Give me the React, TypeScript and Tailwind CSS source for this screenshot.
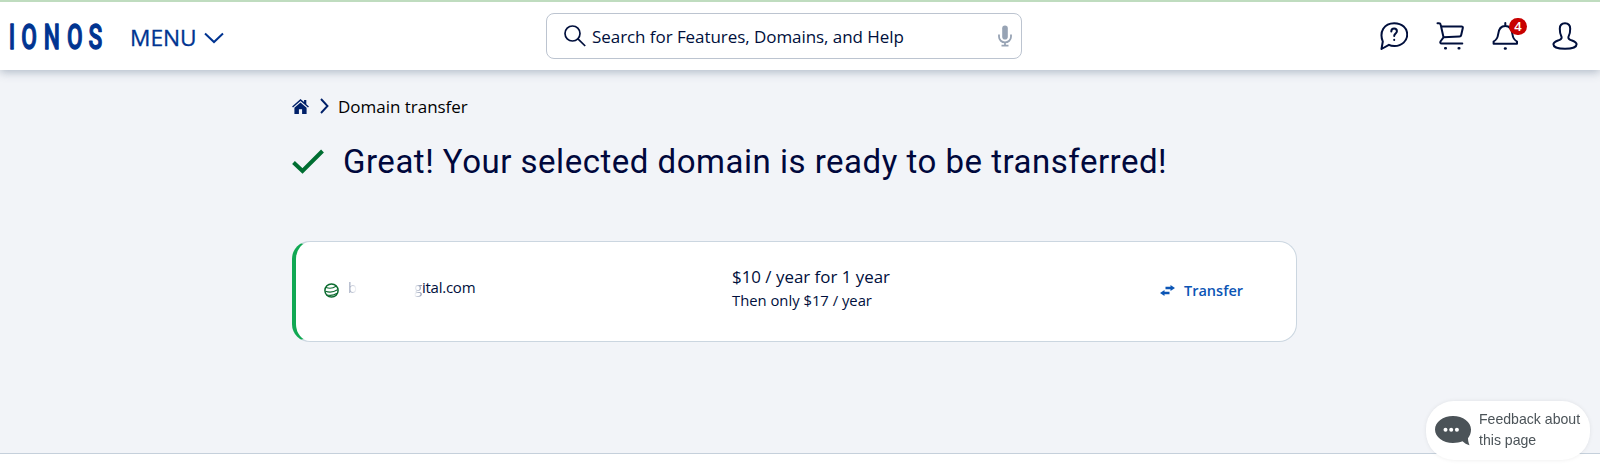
import type { ReactNode } from "react";

const NAVY = "#000f3c";

function Logo() {
  return (
    <svg width="98" height="46" viewBox="0 0 98 46" className="shrink-0" role="img" aria-label="IONOS">
      <text
        transform="scale(0.64 1)"
        x="4.700 31.500 67 103 135"
        y="36.500"
        textAnchor="middle"
        fill="#003491"
        stroke="#003491"
        strokeWidth="1.300"
        strokeLinejoin="round"
        fontFamily="Roboto, sans-serif"
        fontWeight="500"
        fontSize="35.500"
      >
        IONOS
      </text>
    </svg>
  );
}

type IconProps = { className?: string; children: ReactNode; size?: number };

function LineIcon({ className = "", children, size = 28 }: IconProps) {
  return (
    <svg
      width={size}
      height={size}
      viewBox="0 0 28 28"
      fill="none"
      stroke={NAVY}
      strokeWidth="2"
      strokeLinecap="round"
      strokeLinejoin="round"
      className={`shrink-0 ${className}`}
    >
      {children}
    </svg>
  );
}

function Header() {
  return (
    <header className="relative z-10 flex h-[70px] items-center border-t-2 border-[#bfdcbf] bg-white pb-px shadow-[0_2px_9px_rgba(90,110,135,0.45)]">
      <div className="flex w-[546px] items-center pl-[9px]">
        <Logo />
        <button type="button" className="ml-[23px] flex items-center gap-[7px] pt-[4px] text-[#003491]">
          <span className="text-[22.700px] font-medium leading-8 [-webkit-text-stroke:0.3px_#003491]">MENU</span>
          <svg width="20" height="12" viewBox="0 0 20 12" fill="none" stroke="currentColor" strokeWidth="2">
            <path d="M1 1.500 10 10l9-8.500" />
          </svg>
        </button>
      </div>
      <div className="flex h-[46px] w-[476px] items-center rounded-lg border border-[#bcc4d0] pl-[17px] pr-[9px]">
        <svg width="22" height="22" viewBox="0 0 22 22" fill="none" stroke={NAVY} strokeWidth="1.700">
          <circle cx="8.500" cy="8.500" r="7.500" />
          <path d="m13.700 13.700 7.500 7.300" />
        </svg>
        <span className="ml-[6px] flex-1 whitespace-nowrap pt-[2px] text-[17px] tracking-[-0.060px] text-[#000f3c]">
          Search for Features, Domains, and Help
        </span>
        <svg width="14" height="22" viewBox="0 0 14 22" fill="none" stroke="#97a3b4" strokeWidth="1.800">
          <rect x="4.200" y="0.500" width="5.600" height="14" rx="2.800" fill="#97a3b4" stroke="none" />
          <path d="M1 9.500v2.300a6 5.600 0 0 0 12 0V9.500M7 17.500v3M3.500 20.700h7" />
        </svg>
      </div>
      <div className="ml-auto flex items-center pr-[20px]">
        <LineIcon>
          <path d="M1.500 27 2.800 19.500C-1 10 4 1.200 14.200 1.200c8 0 13 5 13 11.300S22 24 14.500 24c-2.300 0-4-.3-5.600-1.200Z" />
          <path d="M11.300 9.600c0-2 1.200-3 2.800-3s2.800 1 2.800 2.700c0 2.200-2.700 2.300-2.700 4.700M14.200 17.800v.1" />
        </LineIcon>
        <LineIcon className="ml-7">
          <path d="M1.500 1.300H3c1 0 1.500.5 1.700 1.500L7.500 15.300 4.800 19c-1 1.500-.5 2.500 1 2.500h20.500M5.500 4.500h20c1 0 1.500.6 1.300 1.500l-1.600 7c-.2 1-.8 1.400-1.700 1.400l-16 .9" />
          <path d="M9.200 26.300h.6M22.700 26.300h.6" strokeWidth="2.500" />
        </LineIcon>
        <div className="relative ml-[28px]">
          <LineIcon>
            <path d="M13.300 1v2.500M1.600 21.800v-2.300c2.700-1.500 4-3 4.500-7 .5-5 2.500-8.500 7.200-8.500s6.700 3.500 7.200 8.500c.5 4 1.800 5.500 4.500 7v2.300Z" />
            <path d="M13 26.500h.6" strokeWidth="2.500" />
          </LineIcon>
          <span className="absolute -top-[4px] left-[17px] flex h-[17px] w-[18px] items-center justify-center rounded-full bg-[#c80000] text-[13px] font-semibold leading-none text-white">
            4
          </span>
        </div>
        <LineIcon className="ml-[32px]">
          <path d="M13 1.200c-4 0-5.200 2.400-5.200 5.500 0 3 .1 4.800 1.400 7.200.9 1.700.5 3.100-1.400 3.900C4.500 19.200 1.400 19.800 1.400 22.300c0 2.800 5 4.500 11.600 4.500s11.600-1.700 11.600-4.500c0-2.500-3.100-3.100-6.400-4.500-1.900-.8-2.300-2.200-1.400-3.900 1.300-2.400 1.400-4.200 1.400-7.200 0-3.100-1.200-5.500-5.200-5.500Z" />
        </LineIcon>
      </div>
    </header>
  );
}

function Breadcrumb() {
  return (
    <nav className="flex h-6 items-center">
      <svg width="17" height="15" viewBox="0 0 18 16" fill="#002069">
        <path d="M9 0 0 8l1 1.100L9 2.200l8 6.900L18 8l-2.800-2.500V1h-2.400v2.300Z" />
        <path d="M9 3.700 2.500 9.200V16h4.800v-5h3.400v5h4.800V9.200Z" />
      </svg>
      <svg width="9" height="16" viewBox="0 0 9 16" fill="none" stroke="#002069" strokeWidth="1.900" className="ml-[11px]">
        <path d="m1 1 6.500 7L1 15" />
      </svg>
      <span className="ml-[9px] pt-px text-[17px] tracking-[-0.020px] text-black">Domain transfer</span>
    </nav>
  );
}

function DomainCard() {
  return (
    <section className="mt-[57px] flex h-[101px] w-[1005px] items-center rounded-[18px] border border-l-4 border-[#cbd6e0] border-l-[#11a853] bg-white pb-[5px] text-[#000f3c]">
      <div className="flex w-[436px] items-center pl-7">
        <svg width="15" height="15" viewBox="0 0 15 15" fill="none" stroke="#0b6b2f" strokeWidth="1.100" className="mt-[2px]">
          <circle cx="7.500" cy="7.500" r="6.600" strokeWidth="1.500" />
          <path d="M2 4.500c3.500 1.300 7.500.5 10-1.200M1.500 8.300c4.500 1.600 9 .4 12-1.500M3 12c3.500.7 7.500 0 10-1.800" />
        </svg>
        <span className="mb-[4px] ml-[9px] w-[66px] text-[15px]">
          <span className="bg-linear-to-r from-[#8b96b0] to-white bg-clip-text text-transparent">b</span>
        </span>
        <span className="mb-[4px] text-[15px] tracking-[-0.240px]">
          <span className="bg-linear-to-r from-white to-[#7f8ba6] bg-clip-text text-transparent">g</span>ital.com
        </span>
      </div>
      <div className="mb-[2px] w-[428px]">
        <p className="text-[16.900px] leading-6">$10 / year for 1 year</p>
        <p className="text-[14.800px] leading-[22px]">Then only $17 / year</p>
      </div>
      <button type="button" className="flex items-center pt-[3px] text-[14.500px] font-semibold text-[#0b55b5]">
        <svg width="15" height="11" viewBox="0 0 15 11" fill="currentColor">
          <path d="M5.500 1.800h5V0L15 3l-4.500 3V4.300h-5ZM9.500 6.700h-5V5L0 8l4.500 3V9.200h5Z" />
        </svg>
        <span className="ml-[9px]">Transfer</span>
      </button>
    </section>
  );
}

function FeedbackButton() {
  return (
    <button
      type="button"
      className="fixed bottom-[4px] right-[10px] flex h-[59px] w-[164px] items-center rounded-[28px] bg-white pl-[9px] text-left shadow-[0_0_4px_rgba(0,0,0,0.08)]"
    >
      <svg width="36" height="30" viewBox="0 0 36 30" className="shrink-0">
        <path
          d="M18 0C8 0 0 6 0 13.500S8 27 18 27c3.500 0 6.800-.6 9.500-1.700 2 2 4.200 3.300 7 4-1-2.200-1.500-4.500-1.500-7 1.900-2.300 3-5.400 3-8.700C36 6 28 0 18 0Z"
          fill="#4b5358"
        />
        <circle cx="10.500" cy="13.800" r="2" fill="#fff" />
        <circle cx="16.200" cy="13.800" r="2" fill="#fff" />
        <circle cx="21.900" cy="13.800" r="2" fill="#fff" />
      </svg>
      <span className="-mt-px ml-[8px] whitespace-nowrap font-['Liberation_Sans',sans-serif] text-[14.100px] leading-[21px] text-[#4b5358]">
        Feedback about
        <br />
        this page
      </span>
    </button>
  );
}

export default function App() {
  return (
    <div className="flex h-[464px] flex-col bg-white font-['Open_Sans',sans-serif]">
      <Header />
      <main className="h-[384px] border-b border-[#c5d0db] bg-[#f2f4f8] pl-[292px] pt-[24px]">
        <Breadcrumb />
        <div className="mt-[20px] flex h-[46px] items-center">
          <svg width="32" height="25" viewBox="0 0 32 25" fill="none" stroke="#006e32" strokeWidth="4">
            <path d="m1.500 13.500 9 8.500L30.500 2" />
          </svg>
          <h1 className="ml-[19px] whitespace-nowrap pt-px font-['Roboto',sans-serif] text-[33px] tracking-[0.510px] text-[#00083c]">
            Great! Your selected domain is ready to be transferred!
          </h1>
        </div>
        <DomainCard />
      </main>
      <FeedbackButton />
    </div>
  );
}
